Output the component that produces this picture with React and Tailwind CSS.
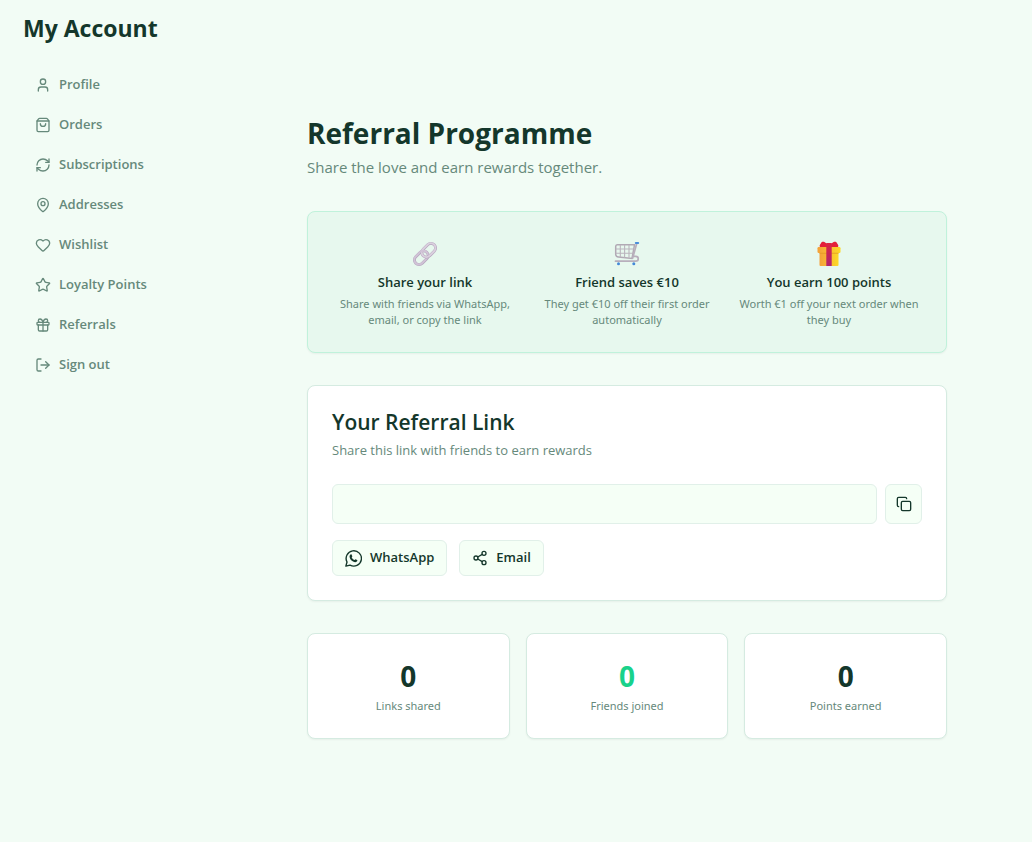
import { Copy, Gift, Heart, LogOut, MapPin, RefreshCw, Share2, ShoppingBag, Star, User } from 'lucide-react'

const NAV = [
  { label: 'Profile', icon: User },
  { label: 'Orders', icon: ShoppingBag },
  { label: 'Subscriptions', icon: RefreshCw },
  { label: 'Addresses', icon: MapPin },
  { label: 'Wishlist', icon: Heart },
  { label: 'Loyalty Points', icon: Star },
  { label: 'Referrals', icon: Gift },
  { label: 'Sign out', icon: LogOut },
]

function LinkArt() {
  return (
    <svg width="26" height="26" viewBox="0 0 26 26" fill="none" aria-hidden="true">
      <g transform="rotate(-45 13 13)">
        <rect x="0" y="8.4" width="15.5" height="9.2" rx="4.6" stroke="#b5a3bd" strokeWidth="3" />
        <rect x="0" y="8.2" width="15.5" height="9.2" rx="4.6" stroke="#d0c3d6" strokeWidth="2" />
        <rect x="10.5" y="8.4" width="15.5" height="9.2" rx="4.6" stroke="#b5a3bd" strokeWidth="3" />
        <rect x="10.5" y="8.2" width="15.5" height="9.2" rx="4.6" stroke="#dad0de" strokeWidth="2" />
        <path d="M10.900 8.2a4.600 4.600 0 0 1 4.600 4.600" stroke="#d0c3d6" strokeWidth="2.2" />
      </g>
    </svg>
  )
}

function CartArt() {
  return (
    <svg width="26" height="26" viewBox="0 0 26 26" fill="none" aria-hidden="true">
      <path d="M3.2 3.8H20.500L18 17.500 4.500 16a3 3 0 0 1-2.800-2.800V5.500a1.700 1.700 0 0 1 1.500-1.700Z" stroke="#b1a9b4" strokeWidth="1.5" />
      <path d="M6.300 4v12M10.600 4v12.400M15 4v12.800M1.800 8h18M1.800 12.200h17" stroke="#bab4bd" strokeWidth="1.1" />
      <path d="M22.800 2.300 18.600 17.200M19.500 15.300h2.300a2.400 2.400 0 0 1 0 4.900H1.500" stroke="#b8afbc" strokeWidth="1.700" strokeLinecap="round" />
      <path d="M21.800 2h2.400" stroke="#4a8ddb" strokeWidth="2" strokeLinecap="round" />
      <circle cx="4.500" cy="22.800" r="1.500" fill="#4489d8" />
      <circle cx="19.800" cy="22.800" r="1.500" fill="#4489d8" />
    </svg>
  )
}

function GiftArt() {
  return (
    <svg width="26" height="26" viewBox="0 0 26 26" aria-hidden="true">
      <defs>
        <linearGradient id="giftBox" x1="0" x2="1">
          <stop offset="0" stopColor="#f4a13a" />
          <stop offset="1" stopColor="#fdd926" />
        </linearGradient>
        <linearGradient id="giftRibbon" x1="0" y1="0" x2="0" y2="1">
          <stop offset="0" stopColor="#dc2640" />
          <stop offset="1" stopColor="#b02470" />
        </linearGradient>
      </defs>
      <rect x="3.5" y="8" width="19" height="17" rx="1" fill="url(#giftBox)" />
      <rect x="1.5" y="6" width="23" height="6" rx="1.2" fill="url(#giftBox)" />
      <path d="M3.5 12.3h19" stroke="#e59a24" strokeWidth="0.8" />
      <path d="M13 6H4.200C2.800 5 4.200 3.400 4.800 2.400 5.200.8 7 .2 8.400 1L11 2.800h4L17.600 1c1.400-.8 3.200-.2 3.600 1.400.6 1 2 2.600.6 3.600Z" fill="#e4203a" />
      <rect x="10.3" y="2" width="5.4" height="23" fill="url(#giftRibbon)" />
    </svg>
  )
}

function WhatsAppIcon() {
  return (
    <svg width="17" height="17" viewBox="0 0 16 16" fill="none" stroke="currentColor" aria-hidden="true">
      <path d="M.8 15.2l1.1-3.9A7.2 7.2 0 1 1 4.7 14.2Z" strokeWidth="1.3" strokeLinejoin="round" />
      <path d="M5 4.4c.5-.5 1.1-.4 1.3.1l.6 1.4c.1.4-.6.9-.6 1.2.5 1 1.3 1.8 2.4 2.3.4 0 .8-.9 1.2-.8l1.5.7c.4.3.2 1.2-.3 1.6-1 .8-2.2.6-3.5-.1C6 9.9 5 8.7 4.5 7.2c-.4-1.2-.2-2.1.5-2.8Z" fill="currentColor" stroke="none" />
    </svg>
  )
}

const STEPS = [
  { title: 'Share your link', text: 'Share with friends via WhatsApp, email, or copy the link', art: LinkArt },
  { title: 'Friend saves €10', text: 'They get €10 off their first order automatically', art: CartArt },
  { title: 'You earn 100 points', text: 'Worth €1 off your next order when they buy', art: GiftArt },
]

const STATS = [
  { label: 'Links shared', value: 0, color: 'text-[#14372b]' },
  { label: 'Friends joined', value: 0, color: 'text-[#19d28b]' },
  { label: 'Points earned', value: 0, color: 'text-[#14372b]' },
]

export default function App() {
  return (
    <div className="flex min-h-screen bg-[#f2fcf5] font-['Open_Sans','Noto_Sans',sans-serif] text-[#14372b]">
      <aside className="w-[222px] shrink-0 pt-3 pl-[23px]">
        <h2 className="text-[23px] leading-8 font-bold">My Account</h2>
        <nav className="mt-[23px] flex flex-col gap-1">
          {NAV.map(({ label, icon: Icon }) => (
            <a key={label} href="#" className="flex h-9 items-center gap-2 px-3 text-[13px] font-semibold text-[#66897b]">
              <Icon size={16} />
              {label}
            </a>
          ))}
        </nav>
      </aside>

      <main className="min-w-0 flex-1 px-6 pt-[115px] pb-24">
        <div className="mx-auto max-w-[640px] space-y-8">
          <header>
            <h1 className="text-[28px] leading-9 font-bold">Referral Programme</h1>
            <p className="mt-1 text-[15px] leading-6 text-[#66897b]">Share the love and earn rewards together.</p>
          </header>

          <section className="grid grid-cols-3 gap-4 rounded-lg border border-[#c0f2db] bg-[#e7f8ee] p-6 text-center shadow-xs">
            {STEPS.map(({ title, text, art: Art }) => (
              <div key={title}>
                <div className="mb-1 flex h-8 items-end justify-center pb-px">
                  <Art />
                </div>
                <h3 className="text-[13px] leading-5 font-semibold">{title}</h3>
                <p className="mt-1 font-['Noto_Sans',sans-serif] text-[11px] leading-4 text-[#66897b]">{text}</p>
              </div>
            ))}
          </section>

          <section className="rounded-lg border border-[#d5ebe1] bg-white p-6 shadow-xs">
            <h2 className="text-[21px] leading-6 font-semibold">Your Referral Link</h2>
            <p className="mt-[6px] text-[13px] leading-5 text-[#66897b]">Share this link with friends to earn rewards</p>
            <div className="mt-6 flex gap-2">
              <input
                type="text"
                readOnly
                aria-label="Referral link"
                className="h-10 min-w-0 flex-1 rounded-md border border-[#e1f0e9] bg-[#f5fff6] px-3 text-[13px]"
              />
              <button type="button" aria-label="Copy link" className="flex h-10 w-[37px] items-center justify-center rounded-md border border-[#e1f0e9] bg-[#f5fff6]">
                <Copy size={16} />
              </button>
            </div>
            <div className="mt-4 flex gap-3">
              <button type="button" className="flex h-9 items-center gap-2 rounded-md border border-[#e1f0e9] bg-[#f5fff6] px-3 text-[13px] font-semibold">
                <WhatsAppIcon />
                WhatsApp
              </button>
              <button type="button" className="flex h-9 items-center gap-2 rounded-md border border-[#e1f0e9] bg-[#f5fff6] px-3 text-[13px] font-semibold">
                <Share2 size={16} />
                Email
              </button>
            </div>
          </section>

          <section className="grid grid-cols-3 gap-4">
            {STATS.map(s => (
              <div key={s.label} className="rounded-lg border border-[#d5ebe1] bg-white p-6 text-center shadow-xs">
                <p className={`text-[28px] leading-9 font-bold ${s.color}`}>{s.value}</p>
                <p className="mt-1 font-['Noto_Sans',sans-serif] text-[11px] leading-4 text-[#66897b]">{s.label}</p>
              </div>
            ))}
          </section>
        </div>
      </main>
    </div>
  )
}
